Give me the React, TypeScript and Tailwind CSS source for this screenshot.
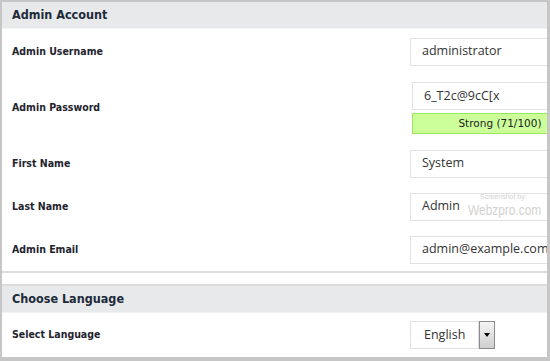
import React from "react";

const labelFont = { fontFamily: '"DejaVu Sans Condensed", "DejaVu Sans", Tahoma, sans-serif' };

function Field({ value }: { value: string }) {
  return (
    <div className="h-[28px] w-[170px] shrink-0 border border-[#e2e2e2] bg-white pl-[11px] flex items-center text-[12.5px] text-[#333] font-['Open_Sans',sans-serif] whitespace-nowrap">
      {value}
    </div>
  );
}

function Row({ label, h, children }: { label: string; h: string; children: React.ReactNode }) {
  return (
    <div className={`flex items-center ${h}`}>
      <div className="w-[408px] shrink-0 pl-[10px] text-[10.5px] font-bold text-[#23232e]" style={labelFont}>
        {label}
      </div>
      <div className="flex-1 min-w-0 overflow-hidden">{children}</div>
    </div>
  );
}

function Header({ title }: { title: string }) {
  return (
    <div className="h-[27px] bg-[#e8e9eb] border-b border-[#f2f4f2] flex items-center pl-[10px] text-[12.5px] font-bold text-[#1d2a3a]" style={labelFont}>
      {title}
    </div>
  );
}

export default function App() {
  return (
    <div className="w-[550px] h-[361px] bg-[#c6c6c6] pt-[2px] pl-[2px] pr-[3px] pb-[4px] overflow-hidden">
      <div className="h-full bg-white flex flex-col overflow-hidden">
        <div className="border-b-2 border-[#dcdcdc] h-[272px] relative">
          <Header title="Admin Account" />
          <Row label="Admin Username" h="h-[45px]">
            <Field value="administrator" />
          </Row>
          <Row label="Admin Password" h="h-[68px]">
            <div className="pl-[2px] w-[200px]">
              <Field value="6_T2c@9cC[x" />
              <div className="mt-[3px] h-[21px] w-[176px] bg-[#ccff99] border border-[#9de85a] flex items-center justify-center text-[10.5px] text-[#222]" style={{ fontFamily: '"DejaVu Sans", Verdana, sans-serif' }}>
                Strong (71/100)
              </div>
            </div>
          </Row>
          <Row label="First Name" h="h-[43px]">
            <Field value="System" />
          </Row>
          <Row label="Last Name" h="h-[43px]">
            <Field value="Admin" />
          </Row>
          <Row label="Admin Email" h="h-[43px]">
            <Field value="admin@example.com" />
          </Row>
          <div className="absolute left-[466px] top-[191px] text-[#d2d2d2] leading-none font-['Liberation_Sans_Narrow','Liberation_Sans',sans-serif]">
            <div className="text-[7px] pl-[12px]">Screenshot by:</div>
            <div className="text-[14px] mt-[3px]" style={{ transform: "scaleX(0.85)", transformOrigin: "left" }}>Webzpro.com</div>
          </div>
        </div>
        <div className="h-[12px]" />
        <div className="border-t-2 border-[#dcdcdc] flex-1">
          <Header title="Choose Language" />
          <Row label="Select Language" h="h-[44px]">
            <div className="flex h-[28px] w-[85px]">
              <div className="flex-1 border border-[#e2e2e2] flex items-center pl-[13px] text-[12.5px] text-[#333] font-['Open_Sans',sans-serif]">
                English
              </div>
              <div className="w-[16px] border border-[#8a8a8a] bg-gradient-to-b from-[#f4f4f4] to-[#cfcfcf] flex items-center justify-center">
                <div className="w-0 h-0 border-l-[3px] border-r-[3px] border-t-[4px] border-l-transparent border-r-transparent border-t-black" />
              </div>
            </div>
          </Row>
        </div>
      </div>
    </div>
  );
}
